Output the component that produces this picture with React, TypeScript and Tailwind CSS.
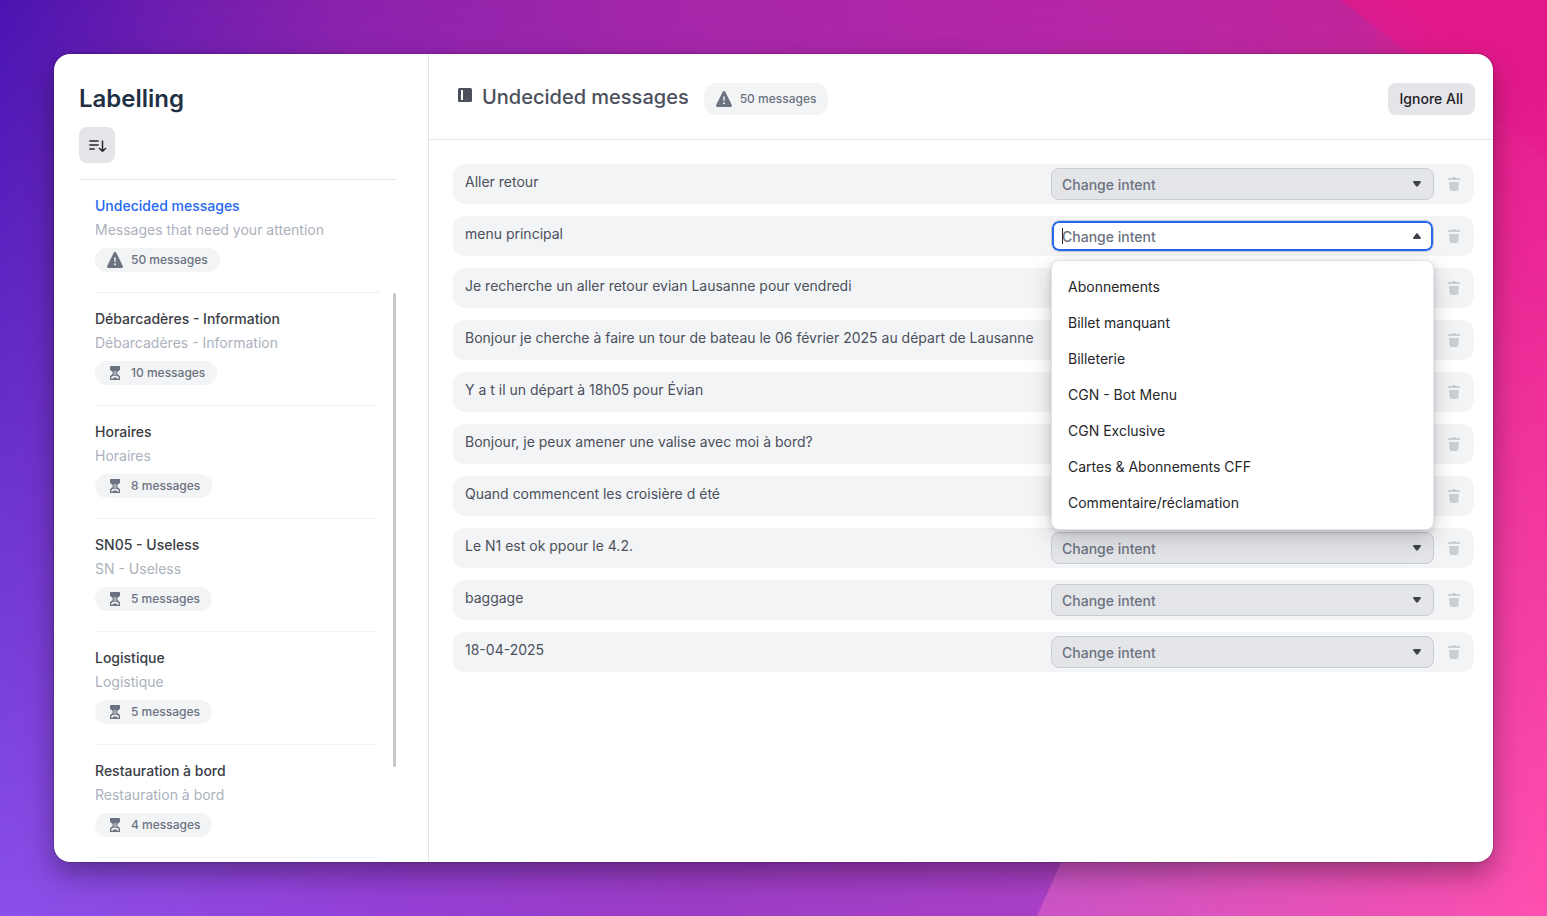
import { useState } from "react";

interface Category {
  title: string;
  description: string;
  count: number;
}

const CATEGORIES: Category[] = [
  { title: "Débarcadères - Information", description: "Débarcadères - Information", count: 10 },
  { title: "Horaires", description: "Horaires", count: 8 },
  { title: "SN05 - Useless", description: "SN - Useless", count: 5 },
  { title: "Logistique", description: "Logistique", count: 5 },
  { title: "Restauration à bord", description: "Restauration à bord", count: 4 },
];

const MESSAGES = [
  "Aller retour",
  "menu principal",
  "Je recherche un aller retour evian Lausanne pour vendredi",
  "Bonjour je cherche à faire un tour de bateau le 06 février 2025 au départ de Lausanne",
  "Y a t il un départ à 18h05 pour Évian",
  "Bonjour, je peux amener une valise avec moi à bord?",
  "Quand commencent les croisière d été",
  "Le N1 est ok ppour le 4.2.",
  "baggage",
  "18-04-2025",
];

const INTENTS = [
  "Abonnements",
  "Billet manquant",
  "Billeterie",
  "CGN - Bot Menu",
  "CGN Exclusive",
  "Cartes & Abonnements CFF",
  "Commentaire/réclamation",
];

function WarningIcon() {
  return (
    <svg className="size-4 shrink-0" viewBox="0 0 16 16" aria-hidden="true">
      <path
        d="M6.6.9a1.55 1.55 0 0 1 2.8 0l6.4 13.2c.5 1-.1 1.9-1.1 1.9H1.3c-1 0-1.6-.9-1.1-1.9z"
        fill="#6b7280"
      />
      <path d="M7.2 5.5h1.6l-.2 4.6H7.4z" fill="#f3f4f6" />
      <circle cx="8" cy="12.3" r="1" fill="#f3f4f6" />
    </svg>
  );
}

function HourglassIcon() {
  return (
    <svg className="size-4 shrink-0" viewBox="0 0 16 16" aria-hidden="true">
      <path
        d="M3.6 1h8.8c.4 0 .6.2.6.6v2.6c0 .5-.1.8-.5 1.1L10.4 7v2l2.1 1.7c.4.3.5.6.5 1.1v2.6c0 .4-.2.6-.6.6H3.6c-.4 0-.6-.2-.6-.6v-2.6c0-.5.1-.8.5-1.1L5.6 9V7L3.5 5.3C3.1 5 3 4.700 3 4.200V1.600c0-.4.2-.6.6-.6z"
        fill="#6b7280"
      />
      <path d="M6.700 6h.9v4h-.9zM8.400 6h.9v4h-.9z" fill="#d3d6da" />
      <path d="M4.300 13.800v-1.300c0-.3.100-.5.400-.7l1.500-1.100h3.600l1.500 1.100c.3.200.400.400.400.700v1.300h-1.200l-.900-1.300H6.400l-.900 1.300z" fill="#f3f4f6" />
    </svg>
  );
}

function SortIcon() {
  return (
    <svg className="h-4 w-5" viewBox="0 0 20 16" fill="none" strokeLinecap="round" aria-hidden="true">
      <path d="M3 4h8M3 8h8M3 12h4" stroke="#55575d" strokeWidth="1.800" />
      <path d="M15.500 4v10M12.500 11.500l3 2.800 3-2.800" stroke="#26272b" strokeWidth="1.500" strokeLinejoin="round" />
    </svg>
  );
}

function PanelIcon() {
  return (
    <svg className="size-[14px] shrink-0" viewBox="0 0 14 14" aria-hidden="true">
      <rect width="14" height="14" rx="1.500" fill="#4b505c" />
      <rect x="3" y="2" width="2" height="10" fill="#fff" />
    </svg>
  );
}

function TrashIcon() {
  return (
    <svg className="h-[14px] w-3" viewBox="0 0 12 14" fill="#cacfd4" aria-hidden="true">
      <path d="M4 1c.2-.6.700-1 1.300-1h1.400c.6 0 1.100.4 1.300 1h3.200c1.100 0 1.100 2 0 2H.8C-.3 3-.3 1 .8 1z" />
      <path d="M1 5h10l-.6 7.300c-.1 1-.8 1.700-1.800 1.700H3.400c-1 0-1.700-.7-1.800-1.700z" />
    </svg>
  );
}

function Caret({ up = false }: { up?: boolean }) {
  return (
    <svg
      className="pointer-events-none col-start-1 row-start-1 mr-[13px] h-2 w-2 self-center justify-self-end"
      viewBox="0 0 8 8"
      fill="#3f424a"
      aria-hidden="true"
    >
      {up ? (
        <path d="M1 7h6c.9 0 1.200-.9.7-1.500L4.900 1.700c-.5-.6-1.300-.6-1.800 0L.3 5.500C-.2 6.100.1 7 1 7z" />
      ) : (
        <path d="M1 1h6c.9 0 1.200.9.7 1.500L4.900 6.300c-.5.6-1.300.6-1.800 0L.3 2.500C-.2 1.900.1 1 1 1z" />
      )}
    </svg>
  );
}

function CategoryItem({ item, active = false }: { item: Category; active?: boolean }) {
  return (
    <a href="#" className="block border-b border-[#f0f1f3] pt-[14px] pb-5 text-sm leading-6">
      <span className={active ? "block font-medium text-[#2468f2]" : "block font-medium text-[#3a3d45]"}>
        {item.title}
      </span>
      <span className="block text-[#abb2bd]">{item.description}</span>
      <span className="mt-[6px] inline-flex h-6 items-center gap-2 rounded-full bg-[#f3f4f6] px-3 align-top text-xs font-medium text-[#6b7280]">
        {active ? <WarningIcon /> : <HourglassIcon />}
        {item.count} messages
      </span>
    </a>
  );
}

function IntentSelect({ label }: { label: string }) {
  return (
    <div className="grid">
      <select
        aria-label={`Intent for ${label}`}
        defaultValue=""
        className="col-start-1 row-start-1 h-8 w-full appearance-none rounded-lg border border-[#c9ccd2] bg-[#e4e5e9] px-[10px] pt-px text-sm font-medium text-[#6b7280]"
      >
        <option value="">Change intent</option>
        {INTENTS.map((intent) => (
          <option key={intent}>{intent}</option>
        ))}
      </select>
      <Caret />
    </div>
  );
}

// Searchable select in its open state, with the list hanging below it
function IntentCombobox({ label }: { label: string }) {
  const [query, setQuery] = useState("");
  const shown = INTENTS.filter((i) => i.toLowerCase().includes(query.toLowerCase()));

  return (
    <div className="relative">
      <div className="grid">
        <input
          role="combobox"
          aria-label={`Intent for ${label}`}
          aria-expanded="true"
          aria-controls="intent-list"
          placeholder="Change intent"
          value={query}
          onChange={(e) => setQuery(e.target.value)}
          className="col-start-1 row-start-1 h-8 w-full rounded-lg border border-[#c9ccd2] bg-white px-[10px] text-sm font-medium text-[#3a3d45] ring-2 ring-[#2468f2] outline-none ring-inset placeholder:text-[#6b7280]"
        />
        {query === "" && (
          <span className="pointer-events-none col-start-1 row-start-1 ml-[11px] h-4 w-px self-center bg-[#26272b]" />
        )}
        <Caret up />
      </div>
      <ul
        id="intent-list"
        role="listbox"
        className="absolute inset-x-0 top-full z-10 mt-2 rounded-lg border border-[#e1e2e8] bg-white py-2 text-sm leading-9 text-[#26272b] shadow-[0_8px_24px_rgba(0,0,0,0.18),0_2px_6px_rgba(0,0,0,0.12)]"
      >
        {shown.map((intent) => (
          <li key={intent} role="option" aria-selected="false" className="px-4">
            {intent}
          </li>
        ))}
      </ul>
    </div>
  );
}

function Backdrop() {
  return (
    <div className="absolute inset-0 -z-10 bg-[linear-gradient(90deg,#8b50ea_0%,#9440d6_25%,#9c3dc6_45%,#a840c6_67%,#e050b8_85%,#ff50b0_100%)]">
      <div className="absolute inset-0 bg-[linear-gradient(90deg,#4a14b0_0%,#6a1cae_10%,#8a22ac_22%,#a626a8_45%,#b826a4_75%,#c02499_88%,#e3188a_95%)] mask-[linear-gradient(to_bottom,black,transparent)]" />
      <svg className="absolute inset-0 size-full" viewBox="0 0 1547 916" preserveAspectRatio="none" aria-hidden="true">
        <defs>
          <linearGradient id="wedge" x1="0" x2="1" y1="0" y2="0">
            <stop offset="0" stopColor="#ca54c6" />
            <stop offset="0.5" stopColor="#e352b9" />
            <stop offset="0.85" stopColor="#f64fb0" stopOpacity="0.4" />
            <stop offset="1" stopColor="#ff4fae" stopOpacity="0" />
          </linearGradient>
          <linearGradient id="corner" x1="0.3" x2="0.7" y1="0.8" y2="0.2">
            <stop offset="0" stopColor="#e3188a" stopOpacity="0" />
            <stop offset="1" stopColor="#e3188a" />
          </linearGradient>
        </defs>
        <path d="M1037 916l29-64h481v64z" fill="url(#wedge)" />
        <path d="M1340 0h207v160z" fill="url(#corner)" />
      </svg>
    </div>
  );
}

function App() {
  return (
    <div className="relative isolate flex h-screen p-[54px] font-[Inter,sans-serif]">
      <Backdrop />
      <div className="flex min-w-0 flex-1 overflow-hidden rounded-2xl bg-white shadow-[0_12px_28px_rgba(0,0,0,0.35),0_0_2px_rgba(0,0,0,0.5)]">
        <aside className="flex w-[375px] shrink-0 flex-col border-r border-[#e3e4e6] pr-8 pl-[25px]">
          <div className="border-b border-[#e3e4e6] pt-[29px] pb-4">
            <h1 className="text-2xl leading-8 font-semibold text-[#1f3044]">Labelling</h1>
            <button
              type="button"
              aria-label="Sort"
              className="mt-3 flex size-9 items-center justify-center rounded-lg bg-[#e4e5e9]"
            >
              <SortIcon />
            </button>
          </div>
          <div className="px-4">
            <CategoryItem
              item={{ title: "Undecided messages", description: "Messages that need your attention", count: 50 }}
              active
            />
          </div>
          <div className="flex min-h-0 flex-1">
            <nav className="min-w-0 flex-1 overflow-hidden px-4">
              {CATEGORIES.map((item) => (
                <CategoryItem key={item.title} item={item} />
              ))}
            </nav>
            <div className="h-5/6 w-[3px] rounded-full bg-[#c8c8c8]" />
          </div>
        </aside>

        <main className="min-w-0 flex-1">
          <header className="flex items-center border-b border-[#e3e4e6] pt-[29px] pr-[18px] pb-6 pl-[29px]">
            <div className="mb-1 flex items-center gap-[10px]">
              <span className="mb-1">
                <PanelIcon />
              </span>
              <h2 className="text-xl leading-7 font-medium text-[#4b505c]">Undecided messages</h2>
            </div>
            <span className="ml-[15px] flex h-8 items-center gap-2 rounded-xl bg-[#f3f4f6] px-3 text-xs font-medium text-[#6b7280]">
              <WarningIcon />
              50 messages
            </span>
            <button
              type="button"
              className="ml-auto h-8 rounded-lg bg-[#e4e5e9] px-3 text-sm font-medium text-[#1f2126]"
            >
              Ignore All
            </button>
          </header>

          <ul className="flex flex-col gap-3 py-6 pr-[19px] pl-6">
            {MESSAGES.map((message, index) => (
              <li key={message} className="flex h-10 items-center rounded-xl bg-[#f3f4f6] pl-3">
                <p className="mb-1 min-w-0 flex-1 truncate text-sm text-[#4b505c]">{message}</p>
                <div className="w-[383px] shrink-0">
                  {index === 1 ? <IntentCombobox label={message} /> : <IntentSelect label={message} />}
                </div>
                <button type="button" aria-label="Ignore message" className="flex h-8 w-10 items-center justify-center">
                  <TrashIcon />
                </button>
              </li>
            ))}
          </ul>
        </main>
      </div>
    </div>
  );
}

export default App;
